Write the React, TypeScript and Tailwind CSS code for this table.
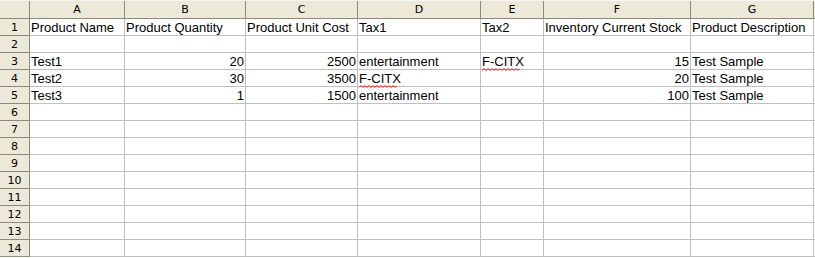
import React from "react";

const cols = [
  { key: "A", w: "w-[95px]" },
  { key: "B", w: "w-[121px]" },
  { key: "C", w: "w-[112px]" },
  { key: "D", w: "w-[123px]" },
  { key: "E", w: "w-[63px]" },
  { key: "F", w: "w-[147px]" },
  { key: "G", w: "w-[123px]" },
];

type Cell = { t: string; r?: boolean; sp?: boolean } | null;

const data: Cell[][] = [
  [
    { t: "Product Name" },
    { t: "Product Quantity" },
    { t: "Product Unit Cost" },
    { t: "Tax1" },
    { t: "Tax2" },
    { t: "Inventory Current Stock" },
    { t: "Product Description" },
  ],
  [null, null, null, null, null, null, null],
  [
    { t: "Test1" },
    { t: "20", r: true },
    { t: "2500", r: true },
    { t: "entertainment" },
    { t: "F-CITX", sp: true },
    { t: "15", r: true },
    { t: "Test Sample" },
  ],
  [
    { t: "Test2" },
    { t: "30", r: true },
    { t: "3500", r: true },
    { t: "F-CITX", sp: true },
    null,
    { t: "20", r: true },
    { t: "Test Sample" },
  ],
  [
    { t: "Test3" },
    { t: "1", r: true },
    { t: "1500", r: true },
    { t: "entertainment" },
    null,
    { t: "100", r: true },
    { t: "Test Sample" },
  ],
];

function Squiggle({ text }: { text: string }) {
  const pts: string[] = [];
  for (let x = 0; x <= 38; x += 2) {
    pts.push(`${x},${(x / 2) % 2 === 0 ? 2.5 : 0.5}`);
  }
  return (
    <span className="relative inline-block">
      {text}
      <svg
        className="absolute left-0 bottom-[-3px]"
        width="38"
        height="3"
        viewBox="0 0 38 3"
      >
        <polyline points={pts.join(" ")} fill="none" stroke="#ff0000" strokeWidth="1" />
      </svg>
    </span>
  );
}

export default function App() {
  const rows = Array.from({ length: 14 }, (_, i) => i);
  return (
    <div className="w-[815px] h-[258px] overflow-hidden bg-white font-['Liberation_Sans',Arial,sans-serif] text-black">
      <div className="flex h-[19px] border-b border-[#8c8a7c] bg-[#ece9d8] border-t border-t-[#f7f6f0]">
        <div className="w-[30px] shrink-0 border-r border-[#8c8a7c] bg-[#ece9d8]" />
        {cols.map((c) => (
          <div
            key={c.key}
            className={`${c.w} shrink-0 border-r border-[#8c8a7c] flex items-center justify-center leading-none font-['DejaVu_Sans',sans-serif] text-[11px]`}
          >
            {c.key}
          </div>
        ))}
        <div className="flex-1" />
      </div>
      {rows.map((i) => {
        const r = data[i];
        return (
          <div key={i} className="flex h-[17px]">
            <div className="w-[30px] shrink-0 border-r border-b border-[#8c8a7c] bg-[#ece9d8] flex items-center justify-center font-['DejaVu_Sans',sans-serif] text-[11px] leading-none">
              {i + 1}
            </div>
            {cols.map((c, j) => {
              const cell = r ? r[j] : null;
              return (
                <div
                  key={c.key}
                  className={`${c.w} shrink-0 border-r border-b border-[#c0c0c0] flex items-center text-[13px] leading-none whitespace-nowrap ${
                    cell && cell.r ? "justify-end pr-[1px]" : "pl-[1px]"
                  }`}
                >
                  {cell ? (cell.sp ? <Squiggle text={cell.t} /> : cell.t) : null}
                </div>
              );
            })}
            <div className="flex-1 border-b border-[#c0c0c0]" />
          </div>
        );
      })}
    </div>
  );
}
